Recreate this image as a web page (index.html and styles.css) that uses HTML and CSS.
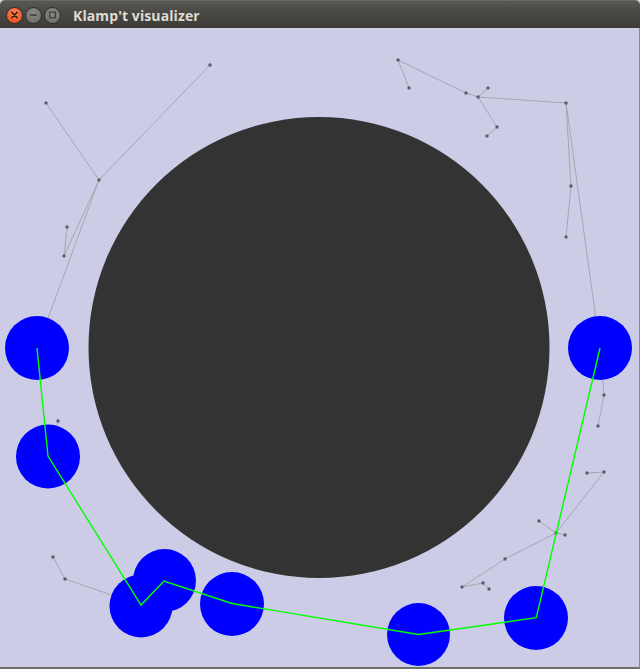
FILE: index.html
```html
<!DOCTYPE html>
<html>
<head>
<meta charset="utf-8">
<title>Klamp't visualizer</title>
<link rel="stylesheet" href="styles.css">
</head>
<body>
<div class="window">
  <div class="titlebar">
    <div class="controls">
      <span class="btn close">
        <svg width="16" height="16" viewBox="0 0 16 16"><path d="M5.2 5.2 L10.8 10.8 M10.8 5.2 L5.2 10.8" stroke="#3a1a10" stroke-width="1.6" stroke-linecap="round"/></svg>
      </span>
      <span class="btn">
        <svg width="16" height="16" viewBox="0 0 16 16"><path d="M4.5 8 H11.5" stroke="#3c3b37" stroke-width="1.6"/></svg>
      </span>
      <span class="btn">
        <svg width="16" height="16" viewBox="0 0 16 16"><rect x="5" y="5" width="6" height="6" fill="none" stroke="#3c3b37" stroke-width="1.3"/></svg>
      </span>
    </div>
    <div class="title">Klamp't visualizer</div>
  </div>
  <div class="canvas">
    <svg class="scene" width="639" height="639" viewBox="0 28 639 639">
      <circle cx="319" cy="347.5" r="230.5" fill="#333333"/>
      <g class="edges">
        <line x1="210" y1="65" x2="99" y2="180"/>
        <line x1="46" y1="103" x2="99" y2="180"/>
        <line x1="99" y1="180" x2="64" y2="256"/>
        <line x1="64" y1="256" x2="67" y2="227"/>
        <line x1="99" y1="180" x2="37" y2="348"/>
        <line x1="58" y1="421" x2="48" y2="456"/>
        <line x1="398" y1="60" x2="409" y2="88"/>
        <line x1="398" y1="60" x2="466" y2="93"/>
        <line x1="466" y1="93" x2="478" y2="97"/>
        <line x1="478" y1="97" x2="488" y2="88"/>
        <line x1="478" y1="97" x2="497" y2="127"/>
        <line x1="497" y1="127" x2="487" y2="136"/>
        <line x1="478" y1="97" x2="566" y2="103"/>
        <line x1="566" y1="103" x2="571" y2="186"/>
        <line x1="571" y1="186" x2="566" y2="237"/>
        <line x1="566" y1="103" x2="600" y2="348"/>
        <line x1="600" y1="348" x2="604" y2="395"/>
        <line x1="604" y1="395" x2="598" y2="426"/>
        <line x1="587" y1="473" x2="604" y2="472"/>
        <line x1="604" y1="472" x2="556" y2="533"/>
        <line x1="556" y1="533" x2="539" y2="521"/>
        <line x1="556" y1="533" x2="565" y2="535"/>
        <line x1="556" y1="533" x2="505" y2="559"/>
        <line x1="505" y1="559" x2="462" y2="587"/>
        <line x1="462" y1="587" x2="483" y2="583"/>
        <line x1="483" y1="583" x2="489" y2="589"/>
        <line x1="53" y1="557" x2="65" y2="579"/>
        <line x1="65" y1="579" x2="141" y2="605"/>
      </g>
      <g class="nodes">
        <circle cx="210" cy="65" r="1.7"/>
        <circle cx="46" cy="103" r="1.7"/>
        <circle cx="99" cy="180" r="1.7"/>
        <circle cx="67" cy="227" r="1.7"/>
        <circle cx="64" cy="256" r="1.7"/>
        <circle cx="58" cy="421" r="1.7"/>
        <circle cx="398" cy="60" r="1.7"/>
        <circle cx="409" cy="88" r="1.7"/>
        <circle cx="466" cy="93" r="1.7"/>
        <circle cx="478" cy="97" r="1.7"/>
        <circle cx="488" cy="88" r="1.7"/>
        <circle cx="497" cy="127" r="1.7"/>
        <circle cx="487" cy="136" r="1.7"/>
        <circle cx="566" cy="103" r="1.7"/>
        <circle cx="571" cy="186" r="1.7"/>
        <circle cx="566" cy="237" r="1.7"/>
        <circle cx="604" cy="395" r="1.7"/>
        <circle cx="598" cy="426" r="1.7"/>
        <circle cx="587" cy="473" r="1.7"/>
        <circle cx="604" cy="472" r="1.7"/>
        <circle cx="556" cy="533" r="1.7"/>
        <circle cx="539" cy="521" r="1.7"/>
        <circle cx="565" cy="535" r="1.7"/>
        <circle cx="505" cy="559" r="1.7"/>
        <circle cx="462" cy="587" r="1.7"/>
        <circle cx="483" cy="583" r="1.7"/>
        <circle cx="489" cy="589" r="1.7"/>
        <circle cx="53" cy="557" r="1.7"/>
        <circle cx="65" cy="579" r="1.7"/>
      </g>
      <g class="robots">
        <circle cx="37" cy="348" r="32"/>
        <circle cx="48" cy="456.5" r="32"/>
        <circle cx="141" cy="606" r="31.5"/>
        <circle cx="164.5" cy="580.5" r="31.5"/>
        <circle cx="232" cy="604" r="32"/>
        <circle cx="418.5" cy="634.5" r="31.5"/>
        <circle cx="536" cy="618" r="32"/>
        <circle cx="600" cy="348" r="32"/>
      </g>
      <polyline class="path" points="37,348 48,456 141,605 164,581 232,603.5 418.5,634.5 536.3,617.7 600,348"/>
    </svg>
  </div>
</div>
</body>
</html>
```

FILE: styles.css
```css
html, body {
  margin: 0;
  padding: 0;
  background: #d6d6d4;
  width: 640px;
  height: 669px;
  overflow: hidden;
}

.window {
  display: flex;
  flex-direction: column;
  width: 640px;
  height: 669px;
}

.titlebar {
  height: 28px;
  flex: 0 0 28px;
  box-sizing: border-box;
  display: flex;
  align-items: center;
  padding-left: 6px;
  background: linear-gradient(to bottom, #5a5853 0%, #4a4945 40%, #3c3b37 100%);
  border-top: 1px solid #6a6964;
  border-radius: 5px 5px 0 0;
}

.controls {
  display: flex;
  gap: 2px;
  align-items: center;
  margin-top: 1px;
}

.btn {
  width: 17px;
  height: 17px;
  border-radius: 50%;
  box-sizing: border-box;
  background: radial-gradient(circle at 50% 35%, #8b8984 0%, #74726d 70%, #5f5d58 100%);
  border: 1px solid #2f2e2b;
  display: flex;
  align-items: center;
  justify-content: center;
}

.btn svg {
  display: block;
}

.btn.close {
  background: radial-gradient(circle at 50% 35%, #f68a5f 0%, #ee5a2c 65%, #d0461c 100%);
  border-color: #3a2a22;
}

.title {
  margin-left: 12px;
  font-family: "Open Sans", "DejaVu Sans", sans-serif;
  font-weight: 700;
  font-size: 14px;
  color: #dfdbd2;
  letter-spacing: 0.1px;
  margin-top: 1px;
}

.canvas {
  flex: 0 0 639px;
  height: 639px;
  display: flex;
  background: #cccce6;
  border-right: 1px solid #8a8a8a;
  border-bottom: 2px solid #707070;
  width: 639px;
}

.scene {
  display: block;
}

.edges line {
  stroke: #a6a6b0;
  stroke-width: 1;
}

.nodes circle {
  fill: #5c5c66;
}

.robots circle {
  fill: #0000ff;
}

.path {
  fill: none;
  stroke: #00ff00;
  stroke-width: 1.4;
}
```
